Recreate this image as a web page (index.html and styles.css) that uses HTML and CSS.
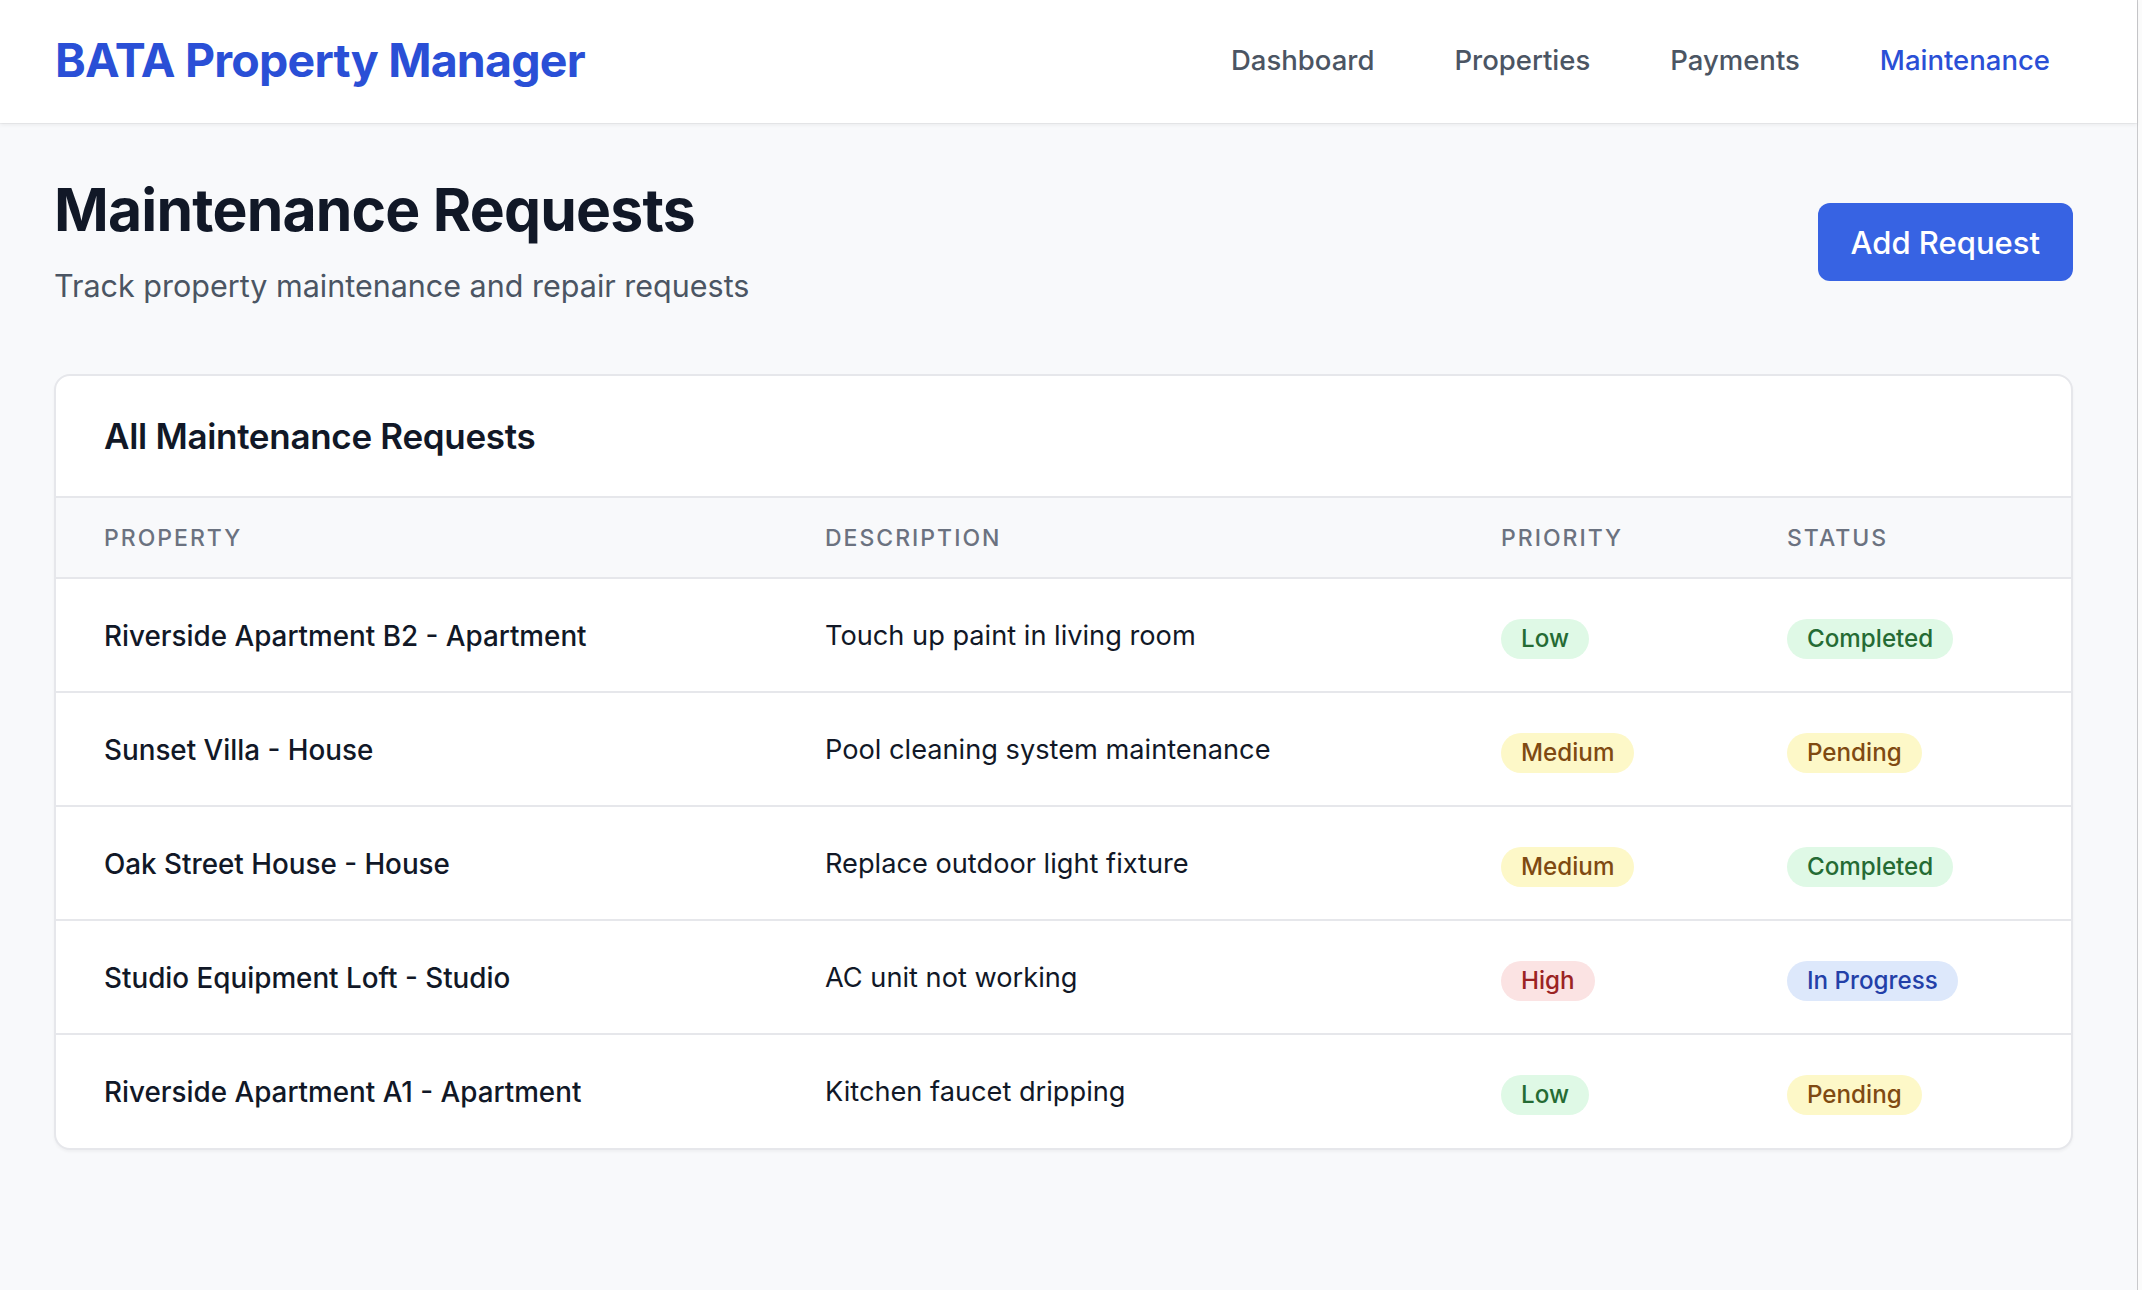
FILE: index.html
```html
<!DOCTYPE html>
<html lang="en">
<head>
<meta charset="utf-8">
<title>BATA Property Manager - Maintenance</title>
<link rel="stylesheet" href="styles.css">
</head>
<body>
<div class="window">
  <header class="topbar">
    <a class="logo" href="#">BATA Property Manager</a>
    <nav class="nav">
      <a class="nav-link" href="#">Dashboard</a>
      <a class="nav-link" href="#">Properties</a>
      <a class="nav-link" href="#">Payments</a>
      <a class="nav-link active" href="#">Maintenance</a>
    </nav>
  </header>
  <main class="main">
    <div class="page-head">
      <div>
        <h1 class="title">Maintenance Requests</h1>
        <p class="subtitle">Track property maintenance and repair requests</p>
      </div>
      <button class="btn-primary">Add Request</button>
    </div>
    <section class="card">
      <div class="card-head">
        <h2 class="card-title">All Maintenance Requests</h2>
      </div>
      <table class="table">
        <colgroup>
          <col class="c1"><col class="c2"><col class="c3"><col class="c4">
        </colgroup>
        <thead>
          <tr>
            <th>Property</th>
            <th>Description</th>
            <th>Priority</th>
            <th>Status</th>
          </tr>
        </thead>
        <tbody>
          <tr>
            <td class="prop">Riverside Apartment B2 - Apartment</td>
            <td class="desc">Touch up paint in living room</td>
            <td><span class="badge green">Low</span></td>
            <td><span class="badge green">Completed</span></td>
          </tr>
          <tr>
            <td class="prop">Sunset Villa - House</td>
            <td class="desc">Pool cleaning system maintenance</td>
            <td><span class="badge yellow">Medium</span></td>
            <td><span class="badge yellow">Pending</span></td>
          </tr>
          <tr>
            <td class="prop">Oak Street House - House</td>
            <td class="desc">Replace outdoor light fixture</td>
            <td><span class="badge yellow">Medium</span></td>
            <td><span class="badge green">Completed</span></td>
          </tr>
          <tr>
            <td class="prop">Studio Equipment Loft - Studio</td>
            <td class="desc">AC unit not working</td>
            <td><span class="badge red">High</span></td>
            <td><span class="badge blue">In Progress</span></td>
          </tr>
          <tr>
            <td class="prop">Riverside Apartment A1 - Apartment</td>
            <td class="desc">Kitchen faucet dripping</td>
            <td><span class="badge green">Low</span></td>
            <td><span class="badge yellow">Pending</span></td>
          </tr>
        </tbody>
      </table>
    </section>
  </main>
</div>
</body>
</html>
```

FILE: styles.css
```css
* { box-sizing: border-box; }
html { background: #fbfbfb; }
body {
  margin: 0;
  font-family: Inter, "Noto Sans", "Liberation Sans", sans-serif;
  color: #111827;
}
.window {
  width: 2138px;
  min-height: 1290px;
  background: #f8f9fb;
  border-right: 1px solid #c9c9cc;
}
.topbar {
  height: 123px;
  background: #ffffff;
  box-shadow: 0 2px 4px rgba(0,0,0,0.06), 0 1px 0 rgba(0,0,0,0.04);
  display: flex;
  align-items: center;
  justify-content: space-between;
  padding: 0 63px 3px 55px;
  position: relative;
}
.logo {
  font-size: 46.5px;
  font-weight: 700;
  color: #2a4fd6;
  text-decoration: none;
  letter-spacing: -0.8px;
}
.nav { display: flex; gap: 32px; }
.nav-link {
  font-size: 27.5px;
  font-weight: 500;
  color: #4b5563;
  text-decoration: none;
  padding: 0 24px;
}
.nav-link.active { color: #2a4fd6; }
.main { padding: 51px 64px 0 54px; }
.page-head {
  display: flex;
  align-items: center;
  justify-content: space-between;
  margin-bottom: 64px;
}
.title {
  margin: 0;
  font-size: 58.8px;
  line-height: 72px;
  font-weight: 700;
  color: #111827;
  letter-spacing: -0.8px;
}
.subtitle {
  margin: 16px 0 0;
  font-size: 30.5px;
  line-height: 48px;
  color: #4b5563;
}
.btn-primary {
  font-family: inherit;
  background: #3763e3;
  color: #ffffff;
  border: none;
  border-radius: 12px;
  height: 78px;
  padding: 0 33px;
  font-size: 31px;
  font-weight: 500;
}
.card {
  background: #ffffff;
  border: 2px solid #e6e7eb;
  border-radius: 16px;
  overflow: hidden;
  box-shadow: 0 2px 3px rgba(0,0,0,0.04);
}
.card-head {
  padding: 32px 48px;
  border-bottom: 2px solid #e6e7eb;
}
.card-title {
  margin: 0;
  font-size: 35px;
  line-height: 56px;
  font-weight: 600;
  color: #111827;
  letter-spacing: -0.3px;
}
.table {
  width: 100%;
  border-collapse: collapse;
  table-layout: fixed;
}
.c1 { width: 721px; }
.c2 { width: 676px; }
.c3 { width: 286px; }
.table th {
  background: #f8f9fb;
  text-align: left;
  font-size: 23px;
  line-height: 31px;
  font-weight: 500;
  color: #6b7280;
  text-transform: uppercase;
  letter-spacing: 2px;
  padding: 25px 48px 23px;
  border-bottom: 2px solid #e6e7eb;
}
.table td {
  padding: 33px 48px 31px;
  height: 113.5px;
  font-size: 27.8px;
  line-height: 48px;
  vertical-align: middle;
  border-bottom: 2px solid #e6e7eb;
  white-space: nowrap;
}
.table tbody tr:last-child td { border-bottom: none; }
.prop { font-weight: 500; color: #111827; }
.table td.desc { color: #111827; font-size: 27.2px; }
.badge {
  display: inline-block;
  font-size: 24.2px;
  line-height: 40px;
  font-weight: 500;
  padding: 0 20px;
  border-radius: 999px;
  position: relative;
  top: 1px;
}
.green { background: #dff9e6; color: #256b34; }
.yellow { background: #fdf8c8; color: #7f4a12; }
.red { background: #fbe3e3; color: #9b2323; }
.blue { background: #dde8fb; color: #2340a8; }
```
